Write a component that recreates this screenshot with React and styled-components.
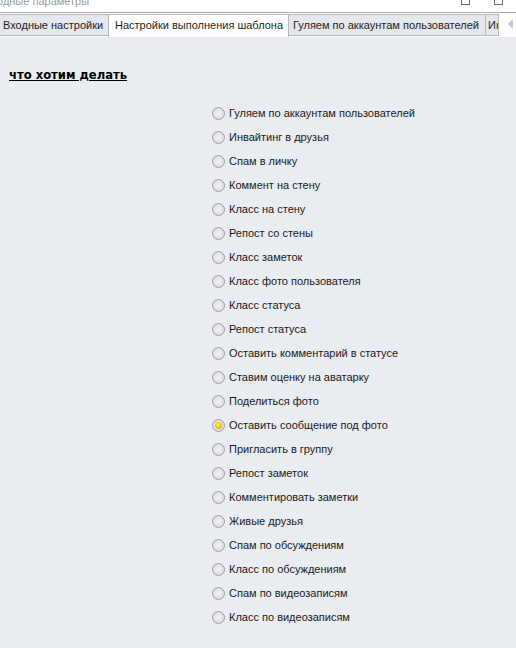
import React from "react";
import styled, { createGlobalStyle } from "styled-components";

const Global = createGlobalStyle`
  html, body { margin: 0; padding: 0; }
  body {
    background: #e9ecf0;
    font-family: "Liberation Sans", Arial, sans-serif;
    overflow: hidden;
    width: 516px;
    height: 648px;
  }
`;

const Page = styled.div`
  display: flex;
  flex-direction: column;
  width: 516px;
  height: 648px;
`;

const TitleBar = styled.div`
  height: 12px;
  background: #ffffff;
  display: flex;
  align-items: flex-end;
  justify-content: space-between;
  overflow: hidden;
  position: relative;
`;

const TitleText = styled.div`
  font-size: 11px;
  color: #9a9a9a;
  margin-left: -3px;
  line-height: 12px;
  transform: translateY(-5px);
`;

const WinButtons = styled.div`
  display: flex;
  gap: 24px;
  margin-right: 13px;
  align-self: flex-start;
`;

const WinBtn = styled.div`
  width: 7px;
  height: 4px;
  border: 1px solid #6b6b6b;
  border-top: none;
  border-radius: 0 0 1px 1px;
`;

const TabStrip = styled.div`
  height: 24px;
  border-top: 1px solid #a6a9ad;
  background: #ffffff;
  display: flex;
  align-items: flex-end;
  position: relative;
  overflow: hidden;
`;

const Tab = styled.div`
  flex: none;
  box-sizing: border-box;
  height: ${(p) => (p.$active ? "24px" : "22px")};
  margin-bottom: ${(p) => (p.$active ? "-1px" : "1px")};
  padding: 0 ${(p) => p.$pad}px;
  width: ${(p) => p.$w}px;
  background: ${(p) => (p.$active ? "#ffffff" : "#e4e7eb")};
  border: 1px solid #b4b7bc;
  border-bottom: ${(p) => (p.$active ? "none" : "1px solid #b4b7bc")};
  border-left: ${(p) => (p.$first ? "none" : "1px solid #b4b7bc")};
  margin-left: ${(p) => (p.$first ? "0" : "-1px")};
  font-size: 11px;
  color: #1e1e1e;
  line-height: 20px;
  white-space: nowrap;
  overflow: hidden;
  z-index: ${(p) => (p.$active ? 2 : 1)};
`;

const ScrollArrow = styled.div`
  position: absolute;
  right: 3px;
  top: 6px;
  width: 0;
  height: 0;
  border-top: 5px solid transparent;
  border-bottom: 5px solid transparent;
  border-right: 5px solid #c2c5c9;
`;

const Content = styled.div`
  flex: 1;
  background: #e9ecf0;
  padding: 31px 0 0 9px;
  display: flex;
  flex-direction: column;
`;

const Heading = styled.div`
  font-family: "DejaVu Sans", Verdana, sans-serif;
  font-weight: bold;
  font-size: 11.6px;
  text-decoration: underline;
  color: #000;
  line-height: 14px;
  align-self: flex-start;
`;

const OptionList = styled.div`
  margin-top: 19px;
  margin-left: 203px;
  display: flex;
  flex-direction: column;
`;

const Option = styled.label`
  display: flex;
  align-items: center;
  height: 24px;
  gap: 4px;
  font-size: 11px;
  color: #1a1a1a;
  white-space: nowrap;
`;

const Radio = styled.span`
  box-sizing: border-box;
  width: 13px;
  height: 13px;
  border-radius: 50%;
  border: 1px solid #9ea2a7;
  background: radial-gradient(circle at 50% 50%, #f4f4f4 0%, #dcdcdc 70%, #cfcfcf 100%);
  display: flex;
  align-items: center;
  justify-content: center;
  flex: none;
  &::after {
    content: "";
    display: ${(p) => (p.$checked ? "block" : "none")};
    width: 7px;
    height: 7px;
    border-radius: 50%;
    background: radial-gradient(circle at 45% 40%, #ffe680 0%, #f8c20a 55%, #e59a00 100%);
  }
`;

const options = [
  "Гуляем по аккаунтам пользователей",
  "Инвайтинг в друзья",
  "Спам в личку",
  "Коммент на стену",
  "Класс на стену",
  "Репост со стены",
  "Класс заметок",
  "Класс фото пользователя",
  "Класс статуса",
  "Репост статуса",
  "Оставить комментарий в статусе",
  "Ставим оценку на аватарку",
  "Поделиться фото",
  "Оставить сообщение под фото",
  "Пригласить в группу",
  "Репост заметок",
  "Комментировать заметки",
  "Живые друзья",
  "Спам по обсуждениям",
  "Класс по обсуждениям",
  "Спам по видеозаписям",
  "Класс по видеозаписям",
];

export default function App() {
  const checked = "Оставить сообщение под фото";
  return (
    <Page>
      <Global />
      <TitleBar>
        <TitleText>одные параметры</TitleText>
        <WinButtons>
          <WinBtn />
          <WinBtn />
        </WinButtons>
      </TitleBar>
      <TabStrip>
        <Tab $first $w={109} $pad={3}>Входные настройки</Tab>
        <Tab $active $w={181} $pad={6}>Настройки выполнения шаблона</Tab>
        <Tab $w={198} $pad={4}>Гуляем по аккаунтам пользователей</Tab>
        <Tab $w={14} $pad={2}>Ин</Tab>
        <ScrollArrow />
      </TabStrip>
      <Content>
        <Heading>что хотим делать</Heading>
        <OptionList>
          {options.map((o) => (
            <Option key={o}>
              <Radio $checked={o === checked} />
              {o}
            </Option>
          ))}
        </OptionList>
      </Content>
    </Page>
  );
}
